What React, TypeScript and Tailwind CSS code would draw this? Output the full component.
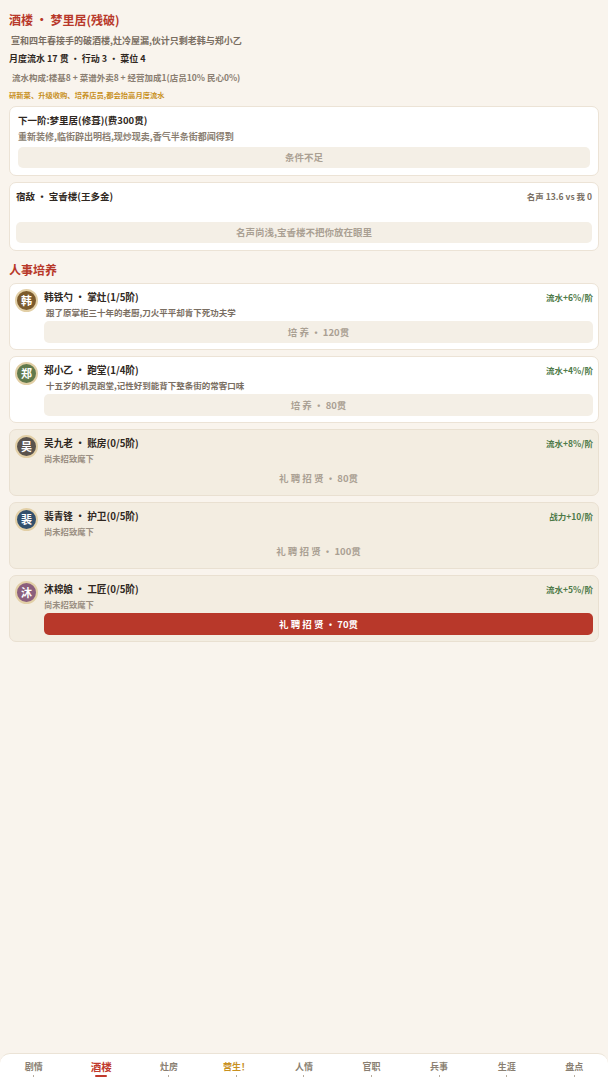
import React from "react"

const font = { fontFamily: '"Noto Sans CJK SC", "Noto Sans", sans-serif' }

type Staff = {
  ch: string
  color: string
  name: string
  desc: string
  bonus: string
  action: string
  hired: boolean
  primary?: boolean
}

const staff: Staff[] = [
  { ch: "韩", color: "bg-[#7b5a2c]", name: "韩铁勺 · 掌灶(1/5阶)", desc: "跟了原掌柜三十年的老厨,刀火平平却肯下死功夫学", bonus: "流水+6%/阶", action: "培 养 · 120贯", hired: true },
  { ch: "郑", color: "bg-[#627a4c]", name: "郑小乙 · 跑堂(1/4阶)", desc: "十五岁的机灵跑堂,记性好到能背下整条街的常客口味", bonus: "流水+4%/阶", action: "培 养 · 80贯", hired: true },
  { ch: "吴", color: "bg-[#5a534d]", name: "吴九老 · 账房(0/5阶)", desc: "尚未招致麾下", bonus: "流水+8%/阶", action: "礼 聘 招 贤 · 80贯", hired: false },
  { ch: "裴", color: "bg-[#33506c]", name: "裴青锋 · 护卫(0/5阶)", desc: "尚未招致麾下", bonus: "战力+10/阶", action: "礼 聘 招 贤 · 100贯", hired: false },
  { ch: "沐", color: "bg-[#8b5f7d]", name: "沐棉娘 · 工匠(0/5阶)", desc: "尚未招致麾下", bonus: "流水+5%/阶", action: "礼 聘 招 贤 · 70贯", hired: false, primary: true },
]

const tabs = ["剧情", "酒楼", "灶房", "营生！", "人情", "官职", "兵事", "生涯", "盘点"]

function StaffCard({ s }: { s: Staff }) {
  return (
    <div
      className={`flex gap-[6px] rounded-[7px] border px-[5px] pt-[4px] pb-[6px] ${
        s.hired ? "border-[#ece3d6] bg-white" : "border-[#e9e0d1] bg-[#f3ede1]"
      }`}
    >
      <div
        className={`mt-[1px] flex h-[23px] w-[23px] shrink-0 items-center justify-center rounded-full border-2 border-[#e2cfa6] text-[11px] font-bold text-white ${s.color}`}
      >
        {s.ch}
      </div>
      <div className="flex min-w-0 flex-1 flex-col">
        <div className="flex items-start justify-between pt-[2px]">
          <span className="text-[9.7px] font-bold leading-[15px] text-[#2f2721]">{s.name}</span>
          <span className="text-[8.5px] font-bold leading-[14px] text-[#4e7a48]">{s.bonus}</span>
        </div>
        {s.hired ? (
          <p className="pl-[2px] text-[8.5px] font-bold leading-[15px] text-[#7a6e62]">{s.desc}</p>
        ) : (
          <p className="text-[8.3px] font-bold leading-[14px] text-[#9a8f82]">{s.desc}</p>
        )}
        <button
          className={`h-[22px] w-full rounded-[5px] text-[9.5px] font-bold ${
            s.primary
              ? "mt-[2px] bg-[#b8382a] text-white"
              : s.hired
              ? "mt-[1px] bg-[#f4efe6] text-[#aaa093]"
              : "mt-[2px] bg-transparent text-[#aaa093]"
          }`}
        >
          {s.action}
        </button>
      </div>
    </div>
  )
}

export default function App() {
  return (
    <div style={font} className="flex min-h-screen flex-col bg-[#f9f4ed]">
      <main className="flex flex-col px-[9px] pt-[10px]">
        <h1 className="text-[12px] font-bold leading-[20px] text-[#b8382a]">酒楼 · 梦里居(残破)</h1>
        <p className="mt-[2px] pl-[2px] text-[9px] font-bold leading-[18px] text-[#7a6e62]">
          宣和四年春接手的破酒楼,灶冷屋漏,伙计只剩老韩与郑小乙
        </p>
        <p className="text-[9px] font-bold leading-[17px] text-[#2f2721]">月度流水 17 贯 · 行动 3 · 菜位 4</p>
        <p className="mt-[1px] pl-[3px] text-[8.5px] font-bold leading-[19px] text-[#8a7e71]">
          流水构成:楼基8 + 菜谱外卖8 + 经营加成1(店员10% 民心0%)
        </p>
        <p className="text-[7.3px] font-bold leading-[17px] text-[#c8901e]">研新菜、升级收购、培养店员,都会抬高月度流水</p>

        <div className="mt-[2px] flex flex-col rounded-[7px] border border-[#ece3d6] bg-white px-[8px] pt-[5px] pb-[7px]">
          <p className="text-[9.5px] font-bold leading-[16px] text-[#2f2721]">下一阶:梦里居(修葺)(费300贯)</p>
          <p className="text-[9px] font-bold leading-[17px] text-[#8a7e71]">重新装修,临街辟出明档,现炒现卖,香气半条街都闻得到</p>
          <button className="mt-[2px] h-[21px] w-full rounded-[5px] bg-[#f4efe6] text-[9.5px] font-bold text-[#aaa093]">
            条件不足
          </button>
        </div>

        <div className="mt-[6px] flex flex-col rounded-[7px] border border-[#ece3d6] bg-white px-[6px] pt-[5px] pb-[7px]">
          <div className="flex items-center justify-between">
            <span className="text-[9.5px] font-bold leading-[16px] text-[#2f2721]">宿敌 · 宝香楼(王多金)</span>
            <span className="text-[8.5px] font-bold text-[#7a6f63]">名声 13.6 vs 我 0</span>
          </div>
          <button className="mt-[18px] h-[21px] w-full rounded-[5px] bg-[#f4efe6] text-[9.5px] font-bold text-[#aaa093]">
            名声尚浅,宝香楼不把你放在眼里
          </button>
        </div>

        <h2 className="mt-[9px] text-[12px] font-bold leading-[20px] text-[#b8382a]">人事培养</h2>

        <div className="mt-[3px] flex flex-col gap-[6px]">
          {staff.map((s) => (
            <StaffCard key={s.ch} s={s} />
          ))}
        </div>
      </main>

      <nav className="mt-auto grid grid-cols-9 rounded-t-[10px] border-t border-[#ebe3d6] bg-white pt-[5px] pb-[3px]">
        {tabs.map((t) => {
          const active = t === "酒楼"
          const warm = t === "营生！"
          return (
            <div key={t} className="flex flex-col items-center">
              <span
                className={`font-bold leading-[15px] ${
                  active ? "text-[10.5px] text-[#c0392b]" : warm ? "text-[9px] text-[#c8901e]" : "text-[9px] text-[#8a7f72]"
                }`}
              >
                {t}
              </span>
              {active ? (
                <span className="mt-[1px] h-[2px] w-[12px] rounded-full bg-[#c0392b]" />
              ) : (
                <span className="mt-[1px] h-[2px] w-[1px] bg-[#b8ad9f]" />
              )}
            </div>
          )
        })}
      </nav>
    </div>
  )
}
